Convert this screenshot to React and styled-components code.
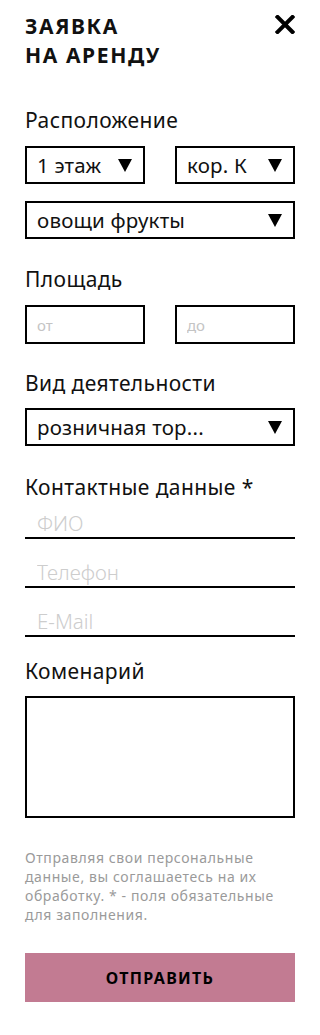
import React from 'react';
import styled, { createGlobalStyle } from 'styled-components';

const GlobalStyle = createGlobalStyle`
  * { box-sizing: border-box; }
  body {
    margin: 0;
    background: #fff;
    font-family: "Noto Sans", "Open Sans", sans-serif;
    color: #111;
  }
`

const Form = styled.form`
  width: 320px;
  padding: 12px 25px 31px 25px;
  display: flex;
  flex-direction: column;
`
const Header = styled.div`
  display: flex;
  justify-content: space-between;
  align-items: flex-start;
`
const Title = styled.h2`
  margin: 0;
  font-size: 21px;
  line-height: 29px;
  font-weight: 700;
  letter-spacing: 1.6px;
  text-transform: uppercase;
`
const CloseButton = styled.button`
  border: none;
  background: transparent;
  padding: 0;
  margin-top: 3px;
  width: 20px;
  height: 19px;
  cursor: pointer;
  display: flex;
`
const Section = styled.div`
  margin-top: ${props => props.top || 0}px;
  display: flex;
  flex-direction: column;
`
const Label = styled.div`
  font-size: 21px;
  line-height: 26px;
  font-weight: 400;
  letter-spacing: 0.4px;
  color: #111;
  margin-bottom: ${props => props.gap || 0}px;
`
const Row = styled.div`
  display: flex;
  justify-content: space-between;
  gap: 30px;
  & + & {
    margin-top: 17px;
  }
`
const SelectBox = styled.div`
  flex: 1;
  height: 38px;
  border: 2px solid #000;
  display: flex;
  align-items: center;
  justify-content: space-between;
  padding: 0 11px 0 10px;
  font-size: 20.5px;
  letter-spacing: 0.2px;
  color: #111;
  white-space: nowrap;
  cursor: pointer;
`
const Arrow = styled.svg`
  flex-shrink: 0;
  width: 14px;
  height: 13px;
  margin-left: 8px;
`
const BoxInput = styled.input`
  flex: 1;
  min-width: 0;
  height: 39px;
  border: 2px solid #000;
  border-radius: 0;
  padding: 0 10px;
  font-family: inherit;
  font-size: 15px;
  color: #111;
  outline: none;
  &::placeholder {
    color: #c4c4c4;
  }
`
const LineInput = styled.input`
  width: 100%;
  height: ${props => props.first ? 39 : 49}px;
  border: none;
  border-bottom: 2px solid #000;
  border-radius: 0;
  padding: ${props => props.first ? 9 : 19}px 12px 0 12px;
  font-family: inherit;
  font-size: 20.5px;
  color: #111;
  outline: none;
  background: transparent;
  &::placeholder {
    color: #cdcdcd;
    font-weight: 300;
  }
`
const TextArea = styled.textarea`
  width: 100%;
  height: 122px;
  border: 2px solid #000;
  border-radius: 0;
  resize: none;
  padding: 10px;
  font-family: inherit;
  font-size: 16px;
  outline: none;
  display: block;
`
const Note = styled.p`
  margin: 30px 0 0 0;
  max-width: 255px;
  font-size: 14px;
  line-height: 19px;
  letter-spacing: 0.6px;
  color: #9a9a9a;
`
const Submit = styled.button`
  margin-top: 29px;
  height: 49px;
  width: 100%;
  border: none;
  background: #c27b92;
  color: #000;
  font-family: inherit;
  font-size: 16px;
  font-weight: 700;
  letter-spacing: 1.3px;
  text-transform: uppercase;
  cursor: pointer;
`

const Select = ({ value }) => (
  <SelectBox>
    <span>{value}</span>
    <Arrow viewBox="0 0 14 13">
      <polygon points="0,0 14,0 7,13" fill="#000" />
    </Arrow>
  </SelectBox>
)

export default () => {
  return (
    <>
      <GlobalStyle />
      <Form onSubmit={e => e.preventDefault()}>
        <Header>
          <Title>Заявка<br />на аренду</Title>
          <CloseButton type="button" aria-label="Закрыть">
            <svg width="20" height="19" viewBox="0 0 20 19">
              <path d="M2.5 2 L17.5 17 M17.5 2 L2.5 17" stroke="#000" strokeWidth="4" strokeLinecap="square" />
            </svg>
          </CloseButton>
        </Header>

        <Section top={37}>
          <Label gap={13}>Расположение</Label>
          <Row>
            <Select value="1 этаж" />
            <Select value="кор. К" />
          </Row>
          <Row>
            <Select value="овощи фрукты" />
          </Row>
        </Section>

        <Section top={27}>
          <Label gap={13}>Площадь</Label>
          <Row>
            <BoxInput placeholder="от" />
            <BoxInput placeholder="до" />
          </Row>
        </Section>

        <Section top={26}>
          <Label gap={12}>Вид деятельности</Label>
          <Row>
            <Select value="розничная тор..." />
          </Row>
        </Section>

        <Section top={28}>
          <Label>Контактные данные *</Label>
          <LineInput first placeholder="ФИО" />
          <LineInput placeholder="Телефон" />
          <LineInput placeholder="E-Mail" />
        </Section>

        <Section top={21}>
          <Label gap={12}>Коменарий</Label>
          <TextArea />
        </Section>

        <Note>
          Отправляя свои персональные данные, вы соглашаетесь на их обработку. * - поля обязательные для заполнения.
        </Note>

        <Submit type="submit">Отправить</Submit>
      </Form>
    </>
  )
}
